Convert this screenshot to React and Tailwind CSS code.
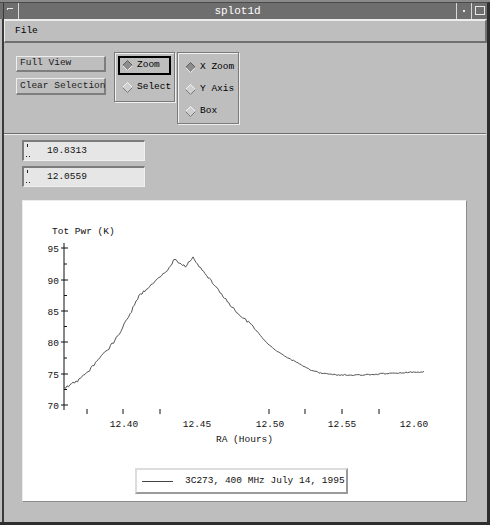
import React from 'react';

const mono = "font-['Liberation_Mono','DejaVu_Sans_Mono',monospace]";

// rough shape of the scan, absolute page coords (plot viewBox uses the same)
const KEY = [
  [64, 388], [70, 385], [78, 381], [87, 373], [101, 357], [110, 347], [118, 336], [123, 327],
  [127, 320], [132, 310], [139, 296], [146, 290], [152, 285], [160, 276], [167, 270], [172, 263],
  [175, 259], [180, 263], [185, 267], [189, 262], [193, 258], [198, 266], [204, 272], [210, 279],
  [218, 290], [226, 300], [235, 310], [243, 318], [250, 323], [260, 335], [268, 344], [275, 350],
  [288, 358], [300, 364], [310, 370], [320, 373], [330, 374], [340, 375], [360, 375], [380, 374],
  [400, 373], [415, 372], [424, 372],
];

function baseY(x) {
  for (let i = 0; i < KEY.length - 1; i++) {
    const [x0, y0] = KEY[i];
    const [x1, y1] = KEY[i + 1];
    if (x >= x0 && x <= x1) return y0 + ((x - x0) / (x1 - x0)) * (y1 - y0);
  }
  return KEY[KEY.length - 1][1];
}

function noise(x) {
  const s = Math.sin(x * 12.9898) * 43758.5453;
  return (s - Math.floor(s)) * 2 - 1;
}

const CURVE = (() => {
  const out = [];
  for (let x = 64; x <= 424; x += 1.5) {
    const amp = x < 250 ? 1.4 : 0.6;
    out.push(`${x.toFixed(1)},${(baseY(x) + noise(x) * amp).toFixed(1)}`);
  }
  return out.join(' ');
})();

const Y_TICKS = [
  { y: 248, label: '95' },
  { y: 280, label: '90' },
  { y: 311, label: '85' },
  { y: 342, label: '80' },
  { y: 374, label: '75' },
  { y: 405, label: '70' },
];
const X_TICKS = [87, 123, 160, 269, 305, 342, 379];
const X_LABELS = [
  { x: 124, label: '12.40' },
  { x: 197, label: '12.45' },
  { x: 270, label: '12.50' },
  { x: 342, label: '12.55' },
  { x: 414, label: '12.60' },
];

function Diamond({ on }) {
  return (
    <svg width="11" height="11" viewBox="0 0 11 11" className="shrink-0">
      <polygon points="5.5,0.5 10.5,5.5 5.5,10.5 0.5,5.5" fill={on ? '#8c8c8c' : '#cfcfcf'} />
      <polyline points="0.5,5.5 5.5,0.5 10.5,5.5" fill="none" stroke={on ? '#5e5e5e' : '#f4f4f4'} />
      <polyline points="0.5,5.5 5.5,10.5 10.5,5.5" fill="none" stroke={on ? '#ededed' : '#7a7a7a'} />
    </svg>
  );
}

function Radio({ on, label }) {
  return (
    <div className="flex items-center gap-[4px] h-[22px] text-[9.5px] text-black">
      <Diamond on={on} />
      <span>{label}</span>
    </div>
  );
}

function Field({ value }) {
  return (
    <div className="w-[123px] h-[21px] bg-[#e6e6e6] border-t-2 border-l-2 border-[#7c7c7c] border-b border-r border-b-[#f0f0f0] border-r-[#f0f0f0] flex items-center">
      <svg width="8" height="17" viewBox="0 0 8 17" className="ml-[1px] shrink-0">
        <rect x="2" y="1" width="1" height="3" fill="#222" />
        <rect x="1" y="13" width="1" height="1" fill="#222" />
        <rect x="4" y="13" width="1" height="1" fill="#222" />
      </svg>
      <span className={`${mono} text-[9.5px] text-[#111] ml-[14px]`}>{value}</span>
    </div>
  );
}

function Plot() {
  return (
    <div className="ml-[18px] mt-[13px] w-[445px] h-[302px] bg-white border-t border-l border-[#ececec] border-b border-r border-b-[#8c8c8c] border-r-[#8c8c8c] flex flex-col">
      <svg width="443" height="262" viewBox="23 201 443 262" className={mono}>
        <text x="52" y="234" fontSize="9.5" fill="#111">Tot Pwr (K)</text>
        <line x1="64" y1="243" x2="64" y2="410" stroke="#111" />
        {Y_TICKS.map((t) => (
          <g key={t.label}>
            <line x1="61" y1={t.y} x2="68" y2={t.y} stroke="#111" />
            <text x="59" y={t.y + 3.5} fontSize="9.5" textAnchor="end" fill="#111">{t.label}</text>
          </g>
        ))}
        {Y_TICKS.slice(0, -1).map((t, i) => (
          <line key={i} x1="64" y1={(t.y + Y_TICKS[i + 1].y) / 2} x2="67" y2={(t.y + Y_TICKS[i + 1].y) / 2} stroke="#111" />
        ))}
        {X_TICKS.map((x) => (
          <line key={x} x1={x} y1="409" x2={x} y2="414" stroke="#111" />
        ))}
        {X_LABELS.map((t) => (
          <text key={t.label} x={t.x} y="427" fontSize="9.5" textAnchor="middle" fill="#111">{t.label}</text>
        ))}
        <text x="216" y="442" fontSize="9.5" fill="#111">RA (Hours)</text>
        <polyline points={CURVE} fill="none" stroke="#555" strokeWidth="1" />
      </svg>
      <div className="flex justify-center mt-[5px] pr-[6px]">
        <div className="h-[26px] w-[213px] border-t-2 border-l-2 border-[#dcdcdc] border-b-2 border-r-2 border-b-[#9a9a9a] border-r-[#9a9a9a] bg-white flex items-center">
          <div className="ml-[5px] w-[31px] h-px bg-[#444]" />
          <span className={`${mono} text-[9.5px] text-[#111] ml-[12px] whitespace-nowrap`}>3C273, 400 MHz July 14, 1995</span>
        </div>
      </div>
    </div>
  );
}

export default function App() {
  return (
    <div className="w-[490px] h-[525px] bg-[#bebebe] flex flex-col overflow-hidden">
      {/* title bar */}
      <div className="h-[19px] bg-[#7a7a7a] flex flex-col shrink-0">
        <div className="h-[3px] bg-[#8a8a8a]" />
        <div className="flex-1 flex bg-[#6e6e6e] border-t border-[#4a4a4a] border-r-[3px] border-r-[#2e2e2e]">
          <div className="w-[4px] border-r border-[#3a3a3a]" />
          <div className="w-[15px] border-r border-[#d8d8d8] relative">
            <div className="absolute left-[3px] top-[5px] w-[6px] h-px bg-[#e8e8e8]" />
            <div className="absolute left-[3px] top-[5px] w-px h-[2px] bg-[#e8e8e8]" />
          </div>
          <div className={`flex-1 flex items-center justify-center text-white text-[11px] ${mono}`}>splot1d</div>
          <div className="w-[15px] border-l border-[#d8d8d8] flex items-center justify-center">
            <div className="w-[2px] h-[2px] bg-[#e8e8e8]" />
          </div>
          <div className="w-[16px] border-l border-[#d8d8d8] flex items-center justify-center">
            <div className="w-[10px] h-[9px] border border-[#e8e8e8]" />
          </div>
        </div>
      </div>

      <div className="flex-1 flex border-b-[3px] border-[#2e2e2e]">
        <div className="w-[2px]" />
        <div className="w-[2px] bg-[#3a3a3a]" />
        <div className="flex-1 flex flex-col">
          {/* menu bar */}
          <div className="h-[24px] shrink-0 border-t-2 border-l border-[#ededed] border-b-2 border-r-2 border-b-[#707070] border-r-[#707070] flex items-center pl-[10px]">
            <span className={`${mono} text-[9.5px] text-black`}>File</span>
          </div>

          {/* controls */}
          <div className="flex items-start pl-[12px] pt-[9px] h-[90px] shrink-0">
            <div className="flex flex-col gap-[6px] mt-[4px] w-[90px]">
              <div className={`${mono} h-[16px] text-[9.5px] text-[#222] pl-[3px] flex items-center border-t border-l border-[#eeeeee] border-b-2 border-r-2 border-b-[#7e7e7e] border-r-[#7e7e7e]`}>Full View</div>
              <div className={`${mono} h-[17px] text-[9.5px] text-[#222] pl-[3px] flex items-center border-t border-l border-[#eeeeee] border-b-2 border-r-2 border-b-[#7e7e7e] border-r-[#7e7e7e] whitespace-nowrap`}>Clear Selection</div>
            </div>
            <div className={`${mono} ml-[8px] w-[61px] h-[50px] border border-[#7a7a7a] shadow-[1px_1px_0_#efefef,inset_1px_1px_0_#efefef] px-[3px] pt-[3px] flex flex-col`}>
              <div className="border-2 border-black h-[19px] flex items-center pl-[2px]">
                <Radio on label="Zoom" />
              </div>
              <div className="pl-[4px] mt-[1px]">
                <Radio label="Select" />
              </div>
            </div>
            <div className={`${mono} ml-[2px] w-[62px] h-[72px] border border-[#7a7a7a] shadow-[1px_1px_0_#efefef,inset_1px_1px_0_#efefef] pl-[7px] pt-[3px] flex flex-col`}>
              <Radio on label="X Zoom" />
              <Radio label="Y Axis" />
              <Radio label="Box" />
            </div>
          </div>

          {/* separator */}
          <div className="h-[2px] shrink-0 border-t border-[#6e6e6e] border-b border-b-[#ededed] mr-[1px]" />

          {/* readouts */}
          <div className="flex flex-col gap-[5px] pl-[18px] pt-[5px]">
            <Field value="10.8313" />
            <Field value="12.0559" />
          </div>

          <Plot />
        </div>
        <div className="w-[3px] bg-[#2e2e2e]" />
      </div>
    </div>
  );
}
